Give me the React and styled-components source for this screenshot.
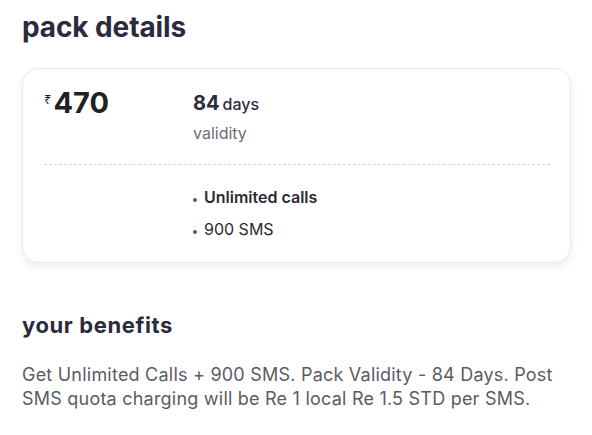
import React from "react";
import styled, { createGlobalStyle } from "styled-components";

const Global = createGlobalStyle`
  html, body { margin: 0; padding: 0; background: #ffffff; }
  body { font-family: Inter, "Noto Sans", sans-serif; -webkit-font-smoothing: antialiased; }
`;

const Page = styled.div`
  padding: 7px 21px 0 22px;
  display: flex;
  flex-direction: column;
`;

const Title = styled.h2`
  margin: 0;
  font-size: ${(p) => p.$size}px;
  line-height: ${(p) => p.$lh}px;
  font-weight: 700;
  color: #2b2b40;
  letter-spacing: ${(p) => p.$ls}px;
`;

const Card = styled.div`
  margin-top: 21px;
  border: 1px solid #e9e9ec;
  border-radius: 16px;
  background: #fff;
  box-shadow: 0 4px 8px rgba(0, 0, 0, 0.07);
  padding: 17px 20px 20px 21px;
`;

const TopRow = styled.div`
  display: grid;
  grid-template-columns: 149px 1fr;
  padding-bottom: 20px;
  border-bottom: 1px dashed #d4d4d8;
`;

const Price = styled.div`
  display: flex;
  align-items: flex-start;
  color: #1f1f24;
`;

const Rupee = styled.span`
  font-size: 13px;
  line-height: 16px;
  margin-top: 5px;
  margin-right: 2px;
  font-family: "Noto Sans", "DejaVu Sans", sans-serif;
`;

const Amount = styled.span`
  font-size: 29px;
  line-height: 34px;
  font-weight: 700;
  letter-spacing: 0;
`;

const Validity = styled.div`
  display: flex;
  flex-direction: column;
  padding-top: 3px;
`;

const DaysLine = styled.div`
  color: #2b2b40;
  line-height: 28px;
`;

const DaysNum = styled.span`
  font-size: 20px;
  font-weight: 700;
`;

const DaysUnit = styled.span`
  font-size: 16px;
  font-weight: 500;
  margin-left: 3px;
`;

const Sub = styled.div`
  font-size: 16px;
  line-height: 22px;
  color: #6b6b75;
  margin-top: 4px;
`;

const Benefits = styled.ul`
  list-style: none;
  margin: 0;
  padding: 22px 0 2px 149px;
  display: flex;
  flex-direction: column;
  gap: 11px;
`;

const Benefit = styled.li`
  display: flex;
  align-items: center;
  font-size: 16px;
  line-height: 21px;
  color: #2a2a30;
  font-weight: ${(p) => (p.$strong ? 600 : 400)};
  letter-spacing: 0;
  &::before {
    content: "";
    width: 4px;
    height: 4px;
    border-radius: 50%;
    background: #5a5a66;
    margin-right: 7px;
    margin-top: 5px;
  }
`;

const Section = styled.div`
  margin-top: 48px;
`;

const Para = styled.p`
  margin: 24px 0 0;
  font-size: 18px;
  line-height: 24px;
  color: #5b5b66;
  letter-spacing: 0.22px;
`;

export default function App() {
  return (
    <>
      <Global />
      <Page>
        <Title $size={28} $lh={40} $ls={-0.1}>pack details</Title>
        <Card>
          <TopRow>
            <Price>
              <Rupee>₹</Rupee>
              <Amount>470</Amount>
            </Price>
            <Validity>
              <DaysLine>
                <DaysNum>84</DaysNum>
                <DaysUnit>days</DaysUnit>
              </DaysLine>
              <Sub>validity</Sub>
            </Validity>
          </TopRow>
          <Benefits>
            <Benefit $strong>Unlimited calls</Benefit>
            <Benefit>900 SMS</Benefit>
          </Benefits>
        </Card>
        <Section>
          <Title $size={22} $lh={28} $ls={0.6}>your benefits</Title>
          <Para>
            Get Unlimited Calls + 900 SMS. Pack Validity - 84 Days. Post SMS quota charging will be Re 1 local Re 1.5 STD per SMS.
          </Para>
        </Section>
      </Page>
    </>
  );
}
